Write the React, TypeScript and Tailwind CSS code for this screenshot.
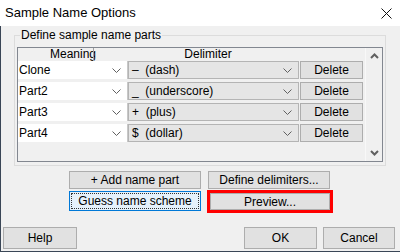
import React from 'react';

const font = { fontFamily: '"Liberation Sans", Arial, sans-serif' };

const Chevron = () => (
  <svg width="9" height="5" viewBox="0 0 9 5" className="shrink-0">
    <path d="M0.5 0.5 L4.5 4.5 L8.5 0.5" fill="none" stroke="#606060" strokeWidth="1" />
  </svg>
);

const ScrollArrow = ({ up }: { up?: boolean }) => (
  <svg width="9" height="6" viewBox="0 0 9 6">
    <path d={up ? 'M1 5 L4.5 1.5 L8 5' : 'M1 1 L4.5 4.5 L8 1'} fill="none" stroke="#606060" strokeWidth="2" />
  </svg>
);

const Btn = ({ label, className = '' }: { label: string; className?: string }) => (
  <button className={`flex items-center justify-center bg-[#e1e1e1] border border-[#adadad] text-[12px] text-black leading-none ${className}`}>
    {label}
  </button>
);

const rows = [
  { meaning: 'Clone', delim: '–  (dash)' },
  { meaning: 'Part2', delim: '_  (underscore)' },
  { meaning: 'Part3', delim: '+  (plus)' },
  { meaning: 'Part4', delim: '$  (dollar)' },
];

export default function App() {
  return (
    <div className="w-[400px] h-[252px] bg-[#f0f0f0] flex flex-col overflow-hidden text-black" style={font}>
      {/* title bar */}
      <div className="h-[26px] bg-white flex items-center justify-between pl-[5px] pr-[8px] shrink-0">
        <span className="text-[13px]">Sample Name Options</span>
        <svg width="11" height="11" viewBox="0 0 11 11">
          <path d="M0.5 0.5 L10.5 10.5 M10.5 0.5 L0.5 10.5" stroke="#111" strokeWidth="1" />
        </svg>
      </div>

      <div className="flex-1 flex flex-col border-l border-b border-[#3a4656]">
        {/* group box */}
        <div className="relative ml-[13px] mt-[9px] w-[372px] h-[131px] border border-[#dcdcdc] pt-[11px] px-[2px]">
          <span className="absolute left-[5px] -top-[8px] bg-[#f0f0f0] px-[1px] text-[12px] leading-[15px]">
            Define sample name parts
          </span>
          <div className="w-[366px] h-[115px] border border-[#828790] flex">
            <div className="w-[347px] flex flex-col">
              <div className="h-[13px] flex text-[12px] leading-[13px] relative">
                <div className="w-[110px] text-center">Meaning</div>
                <div className="absolute left-[75px] top-0 h-[13px] w-px bg-[#a0a0a0]" />
                <div className="w-[160px] text-center">Delimiter</div>
              </div>
              <div className="flex flex-col gap-[3px] mt-[0px]">
                {rows.map((r) => (
                  <div key={r.meaning} className="h-[18px] flex text-[12px]">
                    <div className="w-[110px] h-full bg-white flex items-center justify-between pl-[1px] pr-[6px] border-r border-[#c8c8c8]">
                      <span>{r.meaning}</span>
                      <Chevron />
                    </div>
                    <div className="w-[171px] h-full bg-[#e5e5e5] border border-[#b4b4b4] flex items-center justify-between pl-[3px] pr-[6px]">
                      <span className="whitespace-pre">{r.delim}</span>
                      <Chevron />
                    </div>
                    <Btn label="Delete" className="ml-[1px] w-[63px] h-full" />
                  </div>
                ))}
              </div>
            </div>
            <div className="flex-1 border-l border-[#f8f8f8] flex flex-col items-center justify-between pt-[5px] pb-[5px] pl-[1px]">
              <ScrollArrow up />
              <ScrollArrow />
            </div>
          </div>
        </div>

        {/* action buttons */}
        <div className="ml-[68px] mt-[5px] flex gap-[7px]">
          <Btn label="+ Add name part" className="w-[132px] h-[18px]" />
          <Btn label="Define delimiters..." className="w-[122px] h-[18px] ml-[0px]" />
        </div>
        <div className="ml-[68px] mt-[2px] flex items-start">
          <button className="w-[132px] h-[20px] bg-[#e5f1fb] border border-[#0078d7] p-[1px] text-[12px]">
            <div className="w-full h-full border border-dotted border-[#333] flex items-center justify-center leading-none">
              Guess name scheme
            </div>
          </button>
          <div className="ml-[6px] -mt-[1px] w-[126px] h-[23px] border-[3px] border-[#ff0000] p-0">
            <Btn label="Preview..." className="w-full h-full" />
          </div>
        </div>

        {/* dialog buttons */}
        <div className="mt-[14px] flex items-center">
          <Btn label="Help" className="ml-[2px] w-[74px] h-[22px]" />
          <Btn label="OK" className="ml-[167px] w-[73px] h-[22px]" />
          <Btn label="Cancel" className="ml-[6px] w-[72px] h-[22px]" />
        </div>
      </div>
    </div>
  );
}
